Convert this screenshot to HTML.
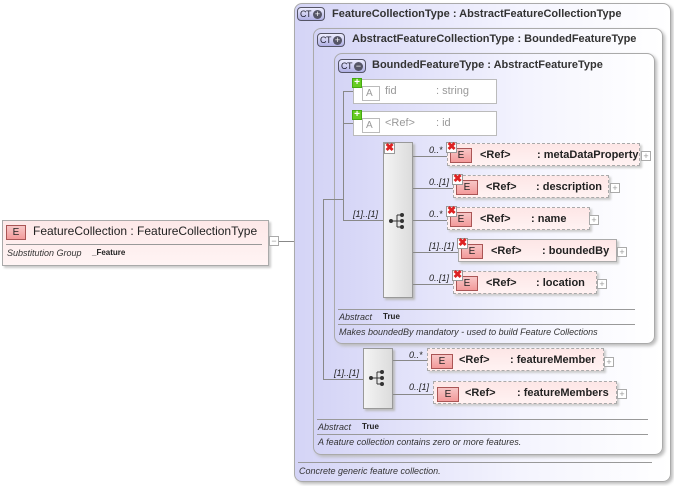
<!DOCTYPE html>
<html><head><meta charset="utf-8"><style>
*{margin:0;padding:0;box-sizing:border-box}
body{width:674px;height:486px;background:#fff;position:relative;overflow:hidden;font-family:"Liberation Sans",sans-serif;font-size:11px;color:#222}
.a{position:absolute}
.ct{position:absolute;border:1px solid #aaa;border-radius:8px;background:linear-gradient(to right,#d4d4f6,#f4f4fe 60%,#fff);box-shadow:2px 2px 3px #bbb}
.hd{position:absolute;font-weight:bold;font-size:11px;white-space:nowrap;color:#333}
.badge{position:absolute;width:28px;height:14px;border:1px solid #556;border-radius:4px;background:linear-gradient(#eeeeff,#b0b0e4);font-size:9px;line-height:12px;padding-left:2px;color:#223;letter-spacing:-0.5px}
.badge i{position:absolute;right:2px;top:2px;width:9px;height:9px;border-radius:50%;background:#556;color:#fff;font-style:normal;font-size:9px;line-height:9px;text-align:center;letter-spacing:0}
.ln{position:absolute;background:#888}
.el{position:absolute;height:23px;background:linear-gradient(#fde6e6,#fff2f2);border:1px dashed #aaa;box-shadow:2px 2px 2px #ccc;font-weight:bold;white-space:nowrap;line-height:22px}
.el.s{border-style:solid}
.eb{position:absolute;width:22px;height:15px;background:linear-gradient(#f7c6c6,#f39a9a);border:1px solid #a55;font-size:10px;line-height:13px;text-align:center;font-weight:normal;color:#222}
.x{position:absolute;width:11px;height:11px;background:#fff;border:1px solid #999;color:#d22;font-size:11px;line-height:9px;text-align:center;font-weight:bold}
.pl{position:absolute;width:10px;height:10px;border:1px solid #aaa;background:#fff;color:#999;font-size:9px;line-height:8px;text-align:center}
.lab{position:absolute;font-style:italic;font-size:9px;color:#222}
.seq{position:absolute;width:30px;background:linear-gradient(to right,#f4f4f4,#dcdcdc);border:1px solid #999;box-shadow:2px 2px 2px #bbb}
.att{position:absolute;height:25px;border:1px solid #bbb;background:#fff;color:#999;font-size:11px;line-height:22px}
.hr{position:absolute;height:1px;background:#999}
.it{position:absolute;font-style:italic;font-size:9px;color:#333;white-space:nowrap}
</style></head><body>

<div class="a" style="left:2px;top:220px;width:267px;height:46px;border:1px solid #aaa;background:linear-gradient(#fde8e8,#fff4f4);box-shadow:2px 2px 2px #ccc"></div>
<div class="eb" style="left:6px;top:225px;width:20px">E</div>
<div class="hd" style="left:33px;top:224px;font-weight:normal;font-size:12px;color:#222">FeatureCollection : FeatureCollectionType</div>
<div class="hr" style="left:6px;top:244px;width:256px"></div>
<div class="it" style="left:7px;top:248px">Substitution Group</div>
<div class="a" style="left:92px;top:248px;font-size:8px;font-weight:bold">_Feature</div>
<div class="pl" style="left:269px;top:236px">−</div>
<div class="ln" style="left:279px;top:241px;width:45px;height:1px"></div>

<div class="ct" style="left:294px;top:3px;width:377px;height:479px"></div>
<div class="badge" style="left:297px;top:7px">CT<i>+</i></div>
<div class="hd" style="left:332px;top:8px">FeatureCollectionType : AbstractFeatureCollectionType</div>
<div class="hr" style="left:298px;top:462px;width:354px"></div>
<div class="it" style="left:299px;top:466px">Concrete generic feature collection.</div>

<div class="ct" style="left:313px;top:28px;width:350px;height:427px"></div>
<div class="badge" style="left:317px;top:33px">CT<i>+</i></div>
<div class="hd" style="left:352px;top:33px">AbstractFeatureCollectionType : BoundedFeatureType</div>
<div class="hr" style="left:317px;top:419px;width:331px"></div>
<div class="it" style="left:318px;top:422px">Abstract</div>
<div class="a" style="left:362px;top:422px;font-size:8px;font-weight:bold">True</div>
<div class="hr" style="left:317px;top:434px;width:331px"></div>
<div class="it" style="left:318px;top:437px">A feature collection contains zero or more features.</div>

<div class="ct" style="left:334px;top:53px;width:321px;height:291px"></div>
<div class="badge" style="left:338px;top:59px">CT<i>−</i></div>
<div class="hd" style="left:372px;top:59px">BoundedFeatureType : AbstractFeatureType</div>
<div class="att" style="left:353px;top:79px;width:144px"><span style="position:absolute;left:8px;top:6px;width:18px;height:15px;border:1px solid #bbb;line-height:13px;font-size:10px;padding-left:3px">A</span><span style="position:absolute;left:31px">fid</span><span style="position:absolute;left:82px">: string</span></div>
<div class="a" style="left:352px;top:78px;width:10px;height:10px;background:#6c2;border:1px solid #4a1;color:#fff;font-size:10px;line-height:8px;text-align:center;font-weight:bold">+</div>
<div class="att" style="left:353px;top:111px;width:144px"><span style="position:absolute;left:8px;top:6px;width:18px;height:15px;border:1px solid #bbb;line-height:13px;font-size:10px;padding-left:3px">A</span><span style="position:absolute;left:31px">&lt;Ref&gt;</span><span style="position:absolute;left:82px">: id</span></div>
<div class="a" style="left:352px;top:110px;width:10px;height:10px;background:#6c2;border:1px solid #4a1;color:#fff;font-size:10px;line-height:8px;text-align:center;font-weight:bold">+</div>
<div class="hr" style="left:338px;top:309px;width:297px"></div>
<div class="it" style="left:339px;top:312px">Abstract</div>
<div class="a" style="left:383px;top:312px;font-size:8px;font-weight:bold">True</div>
<div class="hr" style="left:338px;top:324px;width:297px"></div>
<div class="it" style="left:339px;top:327px">Makes boundedBy mandatory - used to build Feature Collections</div>

<div class="ln" style="left:323px;top:199px;width:1px;height:181px"></div>
<div class="ln" style="left:323px;top:199px;width:20px;height:1px"></div>
<div class="ln" style="left:343px;top:91px;width:1px;height:130px"></div>
<div class="ln" style="left:343px;top:91px;width:10px;height:1px"></div>
<div class="ln" style="left:343px;top:123px;width:10px;height:1px"></div>
<div class="ln" style="left:343px;top:220px;width:40px;height:1px"></div>
<div class="ln" style="left:323px;top:379px;width:40px;height:1px"></div>

<div class="seq" style="left:383px;top:142px;height:156px"></div>
<div class="x" style="left:384px;top:143px">✖</div>
<svg class="a" style="left:388px;top:212px" width="20" height="18"><path d="M2 9H9M9 3V15M9 3H13M9 9H13M9 15H13" stroke="#333" fill="none"/><circle cx="3" cy="9" r="2" fill="#333"/><circle cx="14" cy="3" r="2" fill="#333"/><circle cx="14" cy="9" r="2" fill="#333"/><circle cx="14" cy="15" r="2" fill="#333"/></svg>
<div class="lab" style="left:353px;top:209px">[1]..[1]</div>

<div class="ln" style="left:413px;top:156px;width:34px;height:1px"></div>
<div class="ln" style="left:413px;top:188px;width:40px;height:1px"></div>
<div class="ln" style="left:413px;top:220px;width:34px;height:1px"></div>
<div class="ln" style="left:413px;top:252px;width:45px;height:1px"></div>
<div class="ln" style="left:413px;top:284px;width:40px;height:1px"></div>

<div class="lab" style="left:429px;top:145px">0..*</div>
<div class="el" style="left:447px;top:143px;width:193px"><span style="position:absolute;left:32px">&lt;Ref&gt;</span><span style="position:absolute;left:89px">: metaDataProperty</span></div>
<div class="eb" style="left:450px;top:148px">E</div><div class="x" style="left:446px;top:142px">✖</div><div class="pl" style="left:641px;top:151px">+</div>

<div class="lab" style="left:429px;top:177px">0..[1]</div>
<div class="el" style="left:453px;top:175px;width:156px"><span style="position:absolute;left:32px">&lt;Ref&gt;</span><span style="position:absolute;left:82px">: description</span></div>
<div class="eb" style="left:456px;top:180px">E</div><div class="x" style="left:452px;top:174px">✖</div><div class="pl" style="left:610px;top:183px">+</div>

<div class="lab" style="left:429px;top:209px">0..*</div>
<div class="el" style="left:447px;top:207px;width:143px"><span style="position:absolute;left:32px">&lt;Ref&gt;</span><span style="position:absolute;left:83px">: name</span></div>
<div class="eb" style="left:450px;top:212px">E</div><div class="x" style="left:446px;top:206px">✖</div><div class="pl" style="left:589px;top:215px">+</div>

<div class="lab" style="left:429px;top:241px">[1]..[1]</div>
<div class="el s" style="left:458px;top:239px;width:159px"><span style="position:absolute;left:32px">&lt;Ref&gt;</span><span style="position:absolute;left:83px">: boundedBy</span></div>
<div class="eb" style="left:461px;top:244px">E</div><div class="x" style="left:457px;top:238px">✖</div><div class="pl" style="left:617px;top:247px">+</div>

<div class="lab" style="left:429px;top:273px">0..[1]</div>
<div class="el" style="left:453px;top:271px;width:144px"><span style="position:absolute;left:32px">&lt;Ref&gt;</span><span style="position:absolute;left:82px">: location</span></div>
<div class="eb" style="left:456px;top:276px">E</div><div class="x" style="left:452px;top:270px">✖</div><div class="pl" style="left:597px;top:279px">+</div>

<div class="seq" style="left:363px;top:348px;height:61px"></div>
<svg class="a" style="left:368px;top:369px" width="20" height="18"><path d="M2 9H9M9 3V15M9 3H13M9 9H13M9 15H13" stroke="#333" fill="none"/><circle cx="3" cy="9" r="2" fill="#333"/><circle cx="14" cy="3" r="2" fill="#333"/><circle cx="14" cy="9" r="2" fill="#333"/><circle cx="14" cy="15" r="2" fill="#333"/></svg>
<div class="lab" style="left:334px;top:368px">[1]..[1]</div>
<div class="ln" style="left:393px;top:360px;width:34px;height:1px"></div>
<div class="ln" style="left:393px;top:394px;width:40px;height:1px"></div>
<div class="lab" style="left:409px;top:350px">0..*</div>
<div class="el" style="left:427px;top:348px;width:177px"><span style="position:absolute;left:31px">&lt;Ref&gt;</span><span style="position:absolute;left:82px">: featureMember</span></div>
<div class="eb" style="left:431px;top:354px">E</div><div class="pl" style="left:604px;top:357px">+</div>
<div class="lab" style="left:409px;top:382px">0..[1]</div>
<div class="el" style="left:433px;top:381px;width:184px"><span style="position:absolute;left:31px">&lt;Ref&gt;</span><span style="position:absolute;left:83px">: featureMembers</span></div>
<div class="eb" style="left:437px;top:387px">E</div><div class="pl" style="left:617px;top:389px">+</div>

</body></html>
